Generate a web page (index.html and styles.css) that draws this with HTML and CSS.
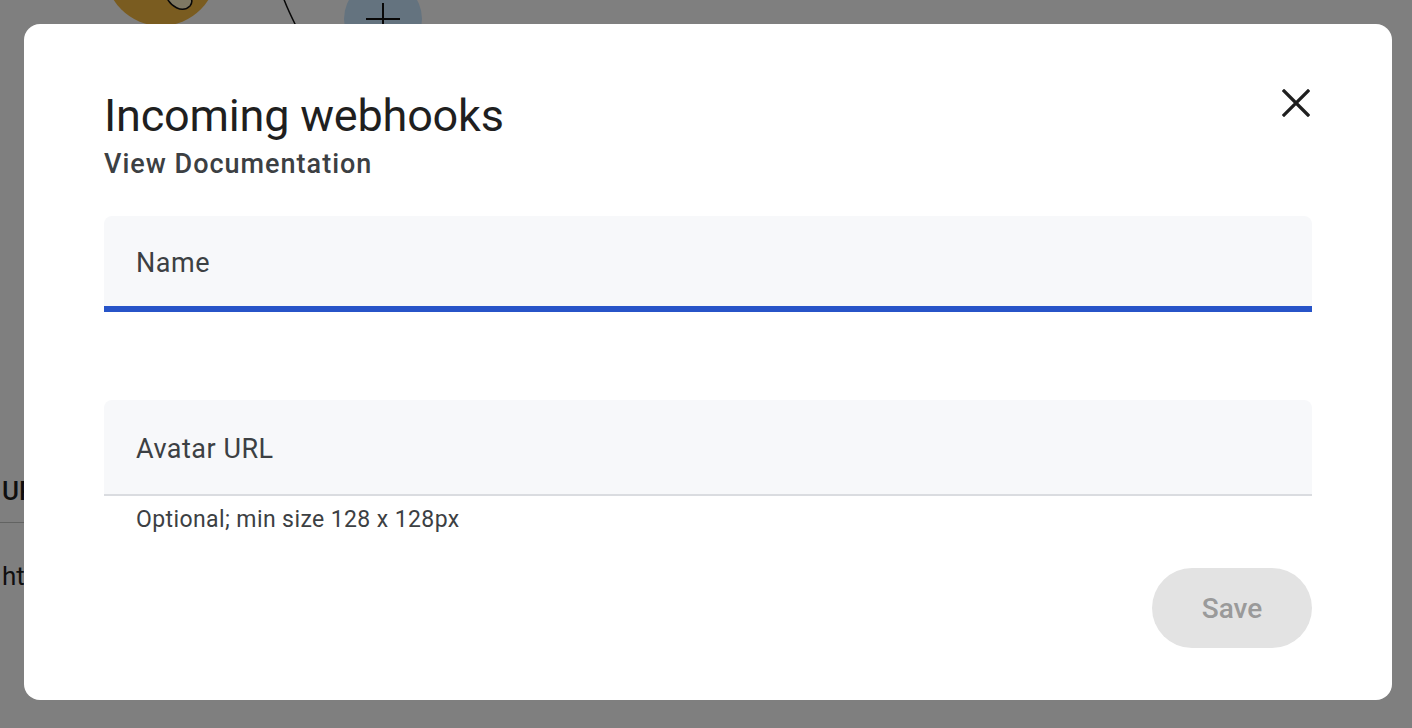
FILE: index.html
```html
<!DOCTYPE html>
<html lang="en">
<head>
<meta charset="utf-8">
<title>Incoming webhooks</title>
<link rel="stylesheet" href="styles.css">
</head>
<body>
<div class="backdrop-page">
  <svg class="deco" width="460" height="40" viewBox="0 0 460 40">
    <circle cx="161" cy="-30" r="56" fill="#f4b840"/>
    <path d="M166 -4 C170 6 182 14 190 6 C196 -2 186 -6 180 -8" fill="#fff2c8" stroke="#111" stroke-width="1.5"/>
    <path d="M282 -6 C286 6 290 14 296 26" fill="none" stroke="#111" stroke-width="1.5"/>
    <circle cx="383" cy="19" r="39" fill="#c8e6ff"/>
    <path d="M366 19 H400 M383 3 V36" stroke="#111" stroke-width="2"/>
  </svg>
  <div class="side-text">
    <div class="side-head">URL</div>
    <div class="side-rule"></div>
    <div class="side-row">https</div>
  </div>
</div>
<div class="overlay"></div>
<div class="dialog" role="dialog" aria-labelledby="dlg-title">
  <div class="dialog-header">
    <div class="titles">
      <h1 id="dlg-title" class="title">Incoming webhooks</h1>
      <a class="doc-link" href="#">View Documentation</a>
    </div>
    <button class="close" aria-label="Close">
      <svg width="28" height="28" viewBox="0 0 28 28"><path d="M2 2 L26 26 M26 2 L2 26" stroke="#1f1f1f" stroke-width="3.2" stroke-linecap="square"/></svg>
    </button>
  </div>
  <div class="field field-active">
    <span class="field-label">Name</span>
  </div>
  <div class="field field-idle">
    <span class="field-label">Avatar URL</span>
  </div>
  <div class="helper">Optional; min size 128 x 128px</div>
  <div class="actions">
    <button class="save" disabled>Save</button>
  </div>
</div>
</body>
</html>
```
FILE: styles.css
```css
html, body {
  margin: 0;
  padding: 0;
  width: 1412px;
  height: 728px;
  overflow: hidden;
  background: #ffffff;
  font-family: Roboto, "Liberation Sans", sans-serif;
}
.backdrop-page {
  position: absolute;
  inset: 0;
}
.deco {
  position: absolute;
  left: 0;
  top: 0;
}
.side-text {
  position: absolute;
  left: 2px;
  top: 474px;
  width: 60px;
}
.side-head {
  font-size: 26px;
  font-weight: 500;
  color: #1f1f1f;
  line-height: 34px;
}
.side-rule {
  height: 1px;
  background: #c4c7c5;
  margin: 14px 0 0 -2px;
}
.side-row {
  font-size: 26px;
  color: #1f1f1f;
  margin-top: 38px;
  line-height: 30px;
}
.overlay {
  position: absolute;
  inset: 0;
  background: rgba(0, 0, 0, 0.5);
}
.dialog {
  position: absolute;
  left: 24px;
  top: 24px;
  width: 1368px;
  height: 676px;
  box-sizing: border-box;
  background: #ffffff;
  border-radius: 16px;
  padding: 64px 80px 0 80px;
  display: flex;
  flex-direction: column;
}
.dialog-header {
  display: flex;
  justify-content: space-between;
  align-items: flex-start;
}
.titles {
  display: flex;
  flex-direction: column;
}
.title {
  margin: 0;
  font-size: 45px;
  font-weight: 400;
  line-height: 56px;
  color: #1f1f1f;
  letter-spacing: -0.2px;
}
.doc-link {
  font-size: 27px;
  font-weight: 500;
  line-height: 36px;
  letter-spacing: 1px;
  color: #3c4043;
  text-decoration: none;
  margin-top: 2px;
}
.close {
  border: 0;
  background: transparent;
  padding: 0;
  margin: 1px 2px 0 0;
  width: 28px;
  height: 28px;
  cursor: pointer;
}
.close svg { display: block; }
.field {
  background: #f7f8fa;
  border-radius: 8px 8px 0 0;
  box-sizing: border-box;
  display: flex;
  align-items: center;
  padding: 0 32px;
}
.field-active {
  margin-top: 34px;
  height: 96px;
  border-bottom: 6px solid #2754c8;
}
.field-idle {
  margin-top: 88px;
  height: 96px;
  border-bottom: 2px solid #dadce0;
}
.field-label {
  font-size: 27px;
  letter-spacing: 0.5px;
  color: #3c4043;
  margin-top: 4px;
}
.helper {
  font-size: 23px;
  letter-spacing: 0.4px;
  color: #3c4043;
  padding: 9px 32px 0;
  line-height: 30px;
}
.actions {
  display: flex;
  justify-content: flex-end;
  margin-top: 33px;
}
.save {
  width: 160px;
  height: 80px;
  border-radius: 40px;
  border: 0;
  background: #e3e3e3;
  color: #9a9a9a;
  font-family: Roboto, "Liberation Sans", sans-serif;
  font-size: 28px;
  font-weight: 500;
}
```
